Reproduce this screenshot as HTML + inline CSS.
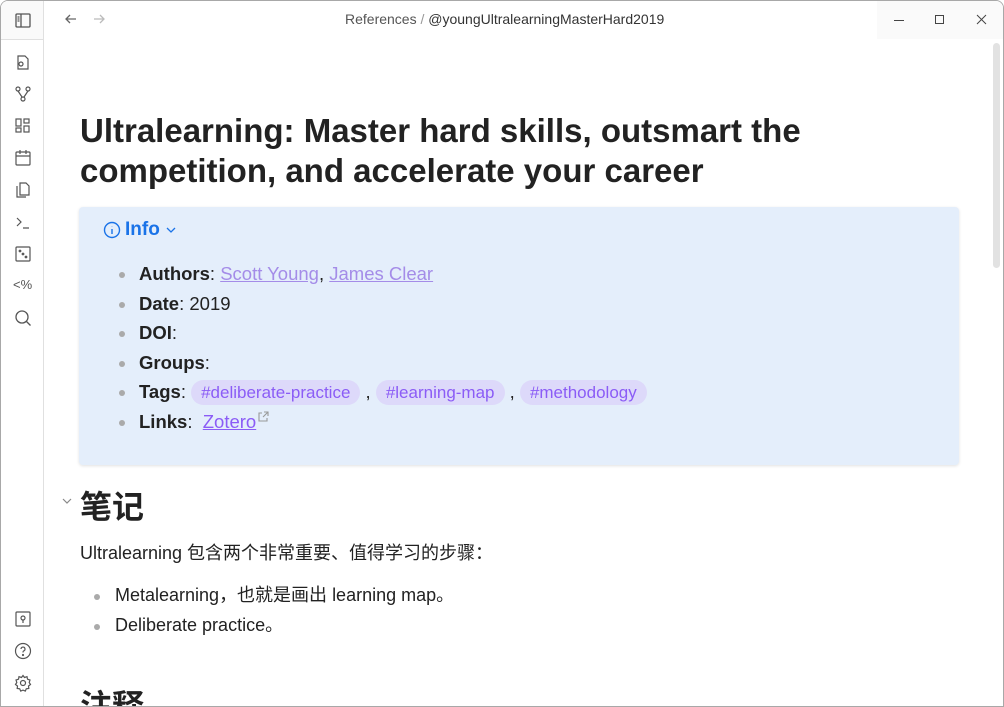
<!DOCTYPE html>
<html><head><meta charset="utf-8"><style>
*{margin:0;padding:0;box-sizing:border-box}
body{width:1004px;height:707px;overflow:hidden;background:#fff;font-family:"Liberation Sans","Noto Sans CJK SC",sans-serif;color:#222;position:relative}
.win{position:absolute;inset:0;border:1px solid #a8a8a8;border-radius:8px 8px 0 0;overflow:hidden}
.side{position:absolute;left:0;top:0;width:43px;height:707px;border-right:1px solid #e0e0e0;background:#fff}
.side .top{height:39px;border-bottom:1px solid #e0e0e0;background:#fafafa}
.ic{position:absolute;left:12px;width:20px;height:20px}
.hdr{position:absolute;left:44px;top:0;right:0;height:38px}
.crumb{position:absolute;left:300px;top:10px;font-size:14px;color:#555}
.wc{position:absolute;right:0;top:0;width:126px;height:38px;background:#fafafa}
.scroll{position:absolute;right:3px;top:42px;width:7px;height:225px;background:#e2e2e2;border-radius:4px}
h1{position:absolute;left:79px;top:110px;font-size:33px;line-height:40px;font-weight:bold;color:#222;width:800px}
.info{position:absolute;left:78px;top:206px;width:880px;height:258px;background:#e4eefb;border-radius:4px;box-shadow:0 1px 3px rgba(0,0,0,.12)}
.ititle{position:absolute;left:24px;top:12px;font-size:19px;font-weight:bold;color:#1a73e8;display:flex;align-items:center;gap:4px}
ul{list-style:none}
.info ul{position:absolute;left:40px;top:52px}
.info li{height:29.6px;font-size:18.5px;line-height:29.6px;position:relative;padding-left:20px;white-space:nowrap}
li:before{content:"";position:absolute;left:0;top:13px;width:6px;height:6px;border-radius:3px;background:#aaa}
.lk{color:#a48ce8;text-decoration:underline}
.tag{background:#ddd9fa;color:#8b5cf6;border-radius:14px;padding:3px 10px;font-size:17px}
h2{position:absolute;left:79px;font-size:32px;font-weight:bold}
p{position:absolute;left:79px;top:538px;font-size:18px}
.ml{position:absolute;left:93px;top:580px}
.ml li{font-size:18px;height:29.5px;line-height:29.5px;position:relative;padding-left:21px}
</style></head><body><div class="win">
<div class="side"><div class="top"></div>
<svg class="ic" style="top:10px" viewBox="0 0 20 20" fill="none" stroke="#555" stroke-width="1.3"><rect x="3" y="3" width="14" height="13" rx="1"/><path d="M8 3v13M4.5 6h2M4.5 8h2M4.5 10h2"/></svg>
<svg class="ic" style="top:51px" viewBox="0 0 20 20" fill="none" stroke="#555" stroke-width="1.2"><path d="M5 4h7l3 3v10H5z"/><circle cx="8" cy="12" r="2"/></svg>
<svg class="ic" style="top:83px" viewBox="0 0 20 20" fill="none" stroke="#555" stroke-width="1.2"><circle cx="5" cy="5" r="2"/><circle cx="15" cy="5" r="2"/><circle cx="10" cy="15" r="2"/><path d="M5 7l4 6M15 7l-4 6"/></svg>
<svg class="ic" style="top:115px" viewBox="0 0 20 20" fill="none" stroke="#555" stroke-width="1.2"><rect x="3" y="3" width="5" height="7"/><rect x="11" y="3" width="5" height="4"/><rect x="3" y="12" width="5" height="4"/><rect x="11" y="10" width="5" height="6"/></svg>
<svg class="ic" style="top:147px" viewBox="0 0 20 20" fill="none" stroke="#555" stroke-width="1.2"><rect x="3" y="4" width="14" height="13" rx="1"/><path d="M3 8h14M7 2v4M13 2v4"/></svg>
<svg class="ic" style="top:179px" viewBox="0 0 20 20" fill="none" stroke="#555" stroke-width="1.2"><path d="M7 3h6l3 3v9H7zM4 6v11h9"/></svg>
<svg class="ic" style="top:211px" viewBox="0 0 20 20" fill="none" stroke="#555" stroke-width="1.2"><path d="M4 6l4 4-4 4M10 16h6"/></svg>
<svg class="ic" style="top:243px" viewBox="0 0 20 20" fill="none" stroke="#555" stroke-width="1.2"><rect x="3" y="3" width="14" height="14" rx="1"/><circle cx="7" cy="7" r=".8"/><circle cx="10" cy="10" r=".8"/><circle cx="13" cy="13" r=".8"/></svg>
<div style="position:absolute;left:12px;top:276px;font-size:13px;color:#555">&lt;%</div>
<svg class="ic" style="top:307px" viewBox="0 0 20 20" fill="none" stroke="#555" stroke-width="1.3"><circle cx="9" cy="9" r="6"/><path d="M13.5 13.5l4 4"/></svg>
<svg class="ic" style="top:608px" viewBox="0 0 20 20" fill="none" stroke="#555" stroke-width="1.2"><rect x="3" y="3" width="14" height="14" rx="1"/><circle cx="10" cy="9" r="2"/><path d="M10 11v3"/></svg>
<svg class="ic" style="top:640px" viewBox="0 0 20 20" fill="none" stroke="#555" stroke-width="1.2"><circle cx="10" cy="10" r="7.5"/><path d="M8 8a2 2 0 1 1 2.5 2c-.5.3-.5.8-.5 1.5"/><circle cx="10" cy="14" r=".5"/></svg>
<svg class="ic" style="top:672px" viewBox="0 0 20 20" fill="none" stroke="#555" stroke-width="1.2"><circle cx="10" cy="10" r="2.5"/><path d="M10 2.5l1.5 2 2.5-.8.5 2.5 2.5.8-.8 2.5 1.3 2-2 1.5.3 2.5-2.5.3-1 2.3-2.3-1-2.3 1-1-2.3-2.5-.3.3-2.5-2-1.5 1.3-2-.8-2.5 2.5-.8.5-2.5 2.5.8z"/></svg>
</div>
<div class="hdr">
<svg style="position:absolute;left:18px;top:10px" width="16" height="16" viewBox="0 0 16 16" fill="none" stroke="#666" stroke-width="1.3"><path d="M13 8H3M7 4L3 8l4 4"/></svg>
<svg style="position:absolute;left:46px;top:10px" width="16" height="16" viewBox="0 0 16 16" fill="none" stroke="#bbb" stroke-width="1.3"><path d="M3 8h10M9 4l4 4-4 4"/></svg>
<div class="crumb">References <span style="color:#999">/</span> <span style="color:#333">@youngUltralearningMasterHard2019</span></div>
</div>
<div class="wc">
<svg style="position:absolute;left:16px;top:13px" width="12" height="12" stroke="#444" stroke-width="1"><path d="M1 6.5h10"/></svg>
<svg style="position:absolute;left:57px;top:13px" width="12" height="12" fill="none" stroke="#444" stroke-width="1"><rect x="1.5" y="1.5" width="8" height="8"/></svg>
<svg style="position:absolute;left:99px;top:13px" width="12" height="12" stroke="#444" stroke-width="1"><path d="M1 1l9 9M10 1l-9 9"/></svg>
</div>
<div class="scroll"></div>
<h1>Ultralearning: Master hard skills, outsmart the competition, and accelerate your career</h1>
<div class="info">
<div class="ititle"><svg width="18" height="18" viewBox="0 0 18 18" fill="none" stroke="#1a73e8" stroke-width="1.4"><circle cx="9" cy="9" r="7.5"/><path d="M9 8v5M9 5.2v.3"/></svg>Info <svg width="14" height="14" viewBox="0 0 14 14" fill="none" stroke="#1a73e8" stroke-width="1.3"><path d="M3 5l4 4 4-4"/></svg></div>
<ul>
<li><b>Authors</b>: <span class="lk">Scott Young</span>, <span class="lk">James Clear</span></li>
<li><b>Date</b>: 2019</li>
<li><b>DOI</b>:</li>
<li><b>Groups</b>:</li>
<li><b>Tags</b>: <span class="tag">#deliberate-practice</span> , <span class="tag">#learning-map</span> , <span class="tag">#methodology</span></li>
<li><b>Links</b>: &nbsp;<span class="lk" style="color:#8b5cf6">Zotero</span><svg width="14" height="14" viewBox="0 0 14 14" fill="none" stroke="#999" stroke-width="1.1" style="vertical-align:4px"><path d="M6 3H3v8h8V8M8 2h4v4M12 2L7 7"/></svg></li>
</ul></div>
<svg style="position:absolute;left:60px;top:494px" width="12" height="12" fill="none" stroke="#888" stroke-width="1.2"><path d="M2 4l4 4 4-4"/></svg>
<h2 style="top:481px">笔记</h2>
<p>Ultralearning 包含两个非常重要、值得学习的步骤：</p>
<ul class="ml"><li>Metalearning，也就是画出 learning map。</li><li>Deliberate practice。</li></ul>
<h2 style="top:680px">注释</h2>
</div></body></html>
